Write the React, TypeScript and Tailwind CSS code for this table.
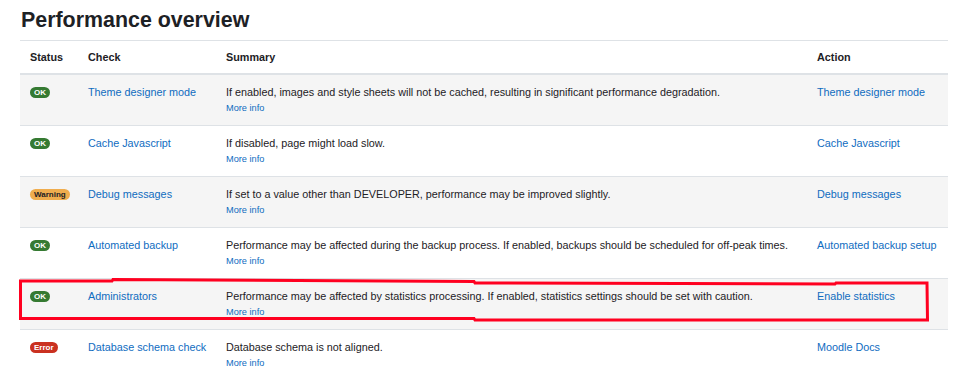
import React from "react";

type Row = {
  status: "OK" | "Warning" | "Error";
  check: string;
  summary: string;
  action: string;
};

const rows: Row[] = [
  { status: "OK", check: "Theme designer mode", summary: "If enabled, images and style sheets will not be cached, resulting in significant performance degradation.", action: "Theme designer mode" },
  { status: "OK", check: "Cache Javascript", summary: "If disabled, page might load slow.", action: "Cache Javascript" },
  { status: "Warning", check: "Debug messages", summary: "If set to a value other than DEVELOPER, performance may be improved slightly.", action: "Debug messages" },
  { status: "OK", check: "Automated backup", summary: "Performance may be affected during the backup process. If enabled, backups should be scheduled for off-peak times.", action: "Automated backup setup" },
  { status: "OK", check: "Administrators", summary: "Performance may be affected by statistics processing. If enabled, statistics settings should be set with caution.", action: "Enable statistics" },
  { status: "Error", check: "Database schema check", summary: "Database schema is not aligned.", action: "Moodle Docs" },
];

function Badge({ s }: { s: Row["status"] }) {
  const cls =
    s === "OK"
      ? "bg-[#357a32] text-white"
      : s === "Warning"
      ? "bg-[#f0ad4e] text-[#1d2125]"
      : "bg-[#ca3120] text-white";
  return (
    <span className={`inline-block rounded-full px-[4px] py-[1px] align-[1px] text-[8px] font-bold leading-[9px] ${cls}`}>
      {s}
    </span>
  );
}

export default function App() {
  return (
    <div
      className="relative h-[378px] w-[960px] overflow-hidden bg-white text-[#1d2125]"
      style={{ fontFamily: '"Liberation Sans", Arial, sans-serif' }}
    >
      <div className="px-[20px] pt-[9px]">
        <h2 className="mb-[9px] pl-[1px] text-[21.4px] font-bold leading-[22px]">Performance overview</h2>
        <table className="w-[928px] table-fixed border-collapse text-[10.8px] leading-[16px]">
          <colgroup>
            <col className="w-[58px]" />
            <col className="w-[138px]" />
            <col className="w-[591px]" />
            <col />
          </colgroup>
          <thead>
            <tr className="border-t border-b-2 border-[#dee2e6] text-left">
              <th className="px-[10px] py-[8px] font-bold">Status</th>
              <th className="px-[10px] py-[8px] font-bold">Check</th>
              <th className="px-[10px] py-[8px] font-bold">Summary</th>
              <th className="px-[10px] py-[8px] font-bold">Action</th>
            </tr>
          </thead>
          <tbody>
            {rows.map((r, i) => (
              <tr
                key={i}
                className={`h-[51px] border-b border-[#dee2e6] align-top ${i % 2 === 0 ? "bg-[#f5f5f5]" : "bg-white"}`}
              >
                <td className="whitespace-nowrap px-[10px] pt-[9px]">
                  <Badge s={r.status} />
                </td>
                <td className="whitespace-nowrap px-[10px] pt-[9px] text-[#0f6cbf]">{r.check}</td>
                <td className="whitespace-nowrap px-[10px] pt-[9px]">
                  <div>{r.summary}</div>
                  <div className="text-[9.2px] leading-[16px] text-[#0f6cbf]">More info</div>
                </td>
                <td className="whitespace-nowrap px-[10px] pt-[9px] text-[#0f6cbf]">{r.action}</td>
              </tr>
            ))}
          </tbody>
        </table>
      </div>
      <svg className="pointer-events-none absolute left-0 top-0" width="960" height="378">
        <path
          d="M20.5,281 L112,281 L113,279.5 L474,281.5 L475,283 L835,284 L836,283 L927,283 L927.5,320 L475,320 L474,318.5 L20.5,318.5 Z"
          fill="none"
          stroke="#ff0020"
          strokeWidth="3"
          strokeLinejoin="miter"
        />
      </svg>
    </div>
  );
}
